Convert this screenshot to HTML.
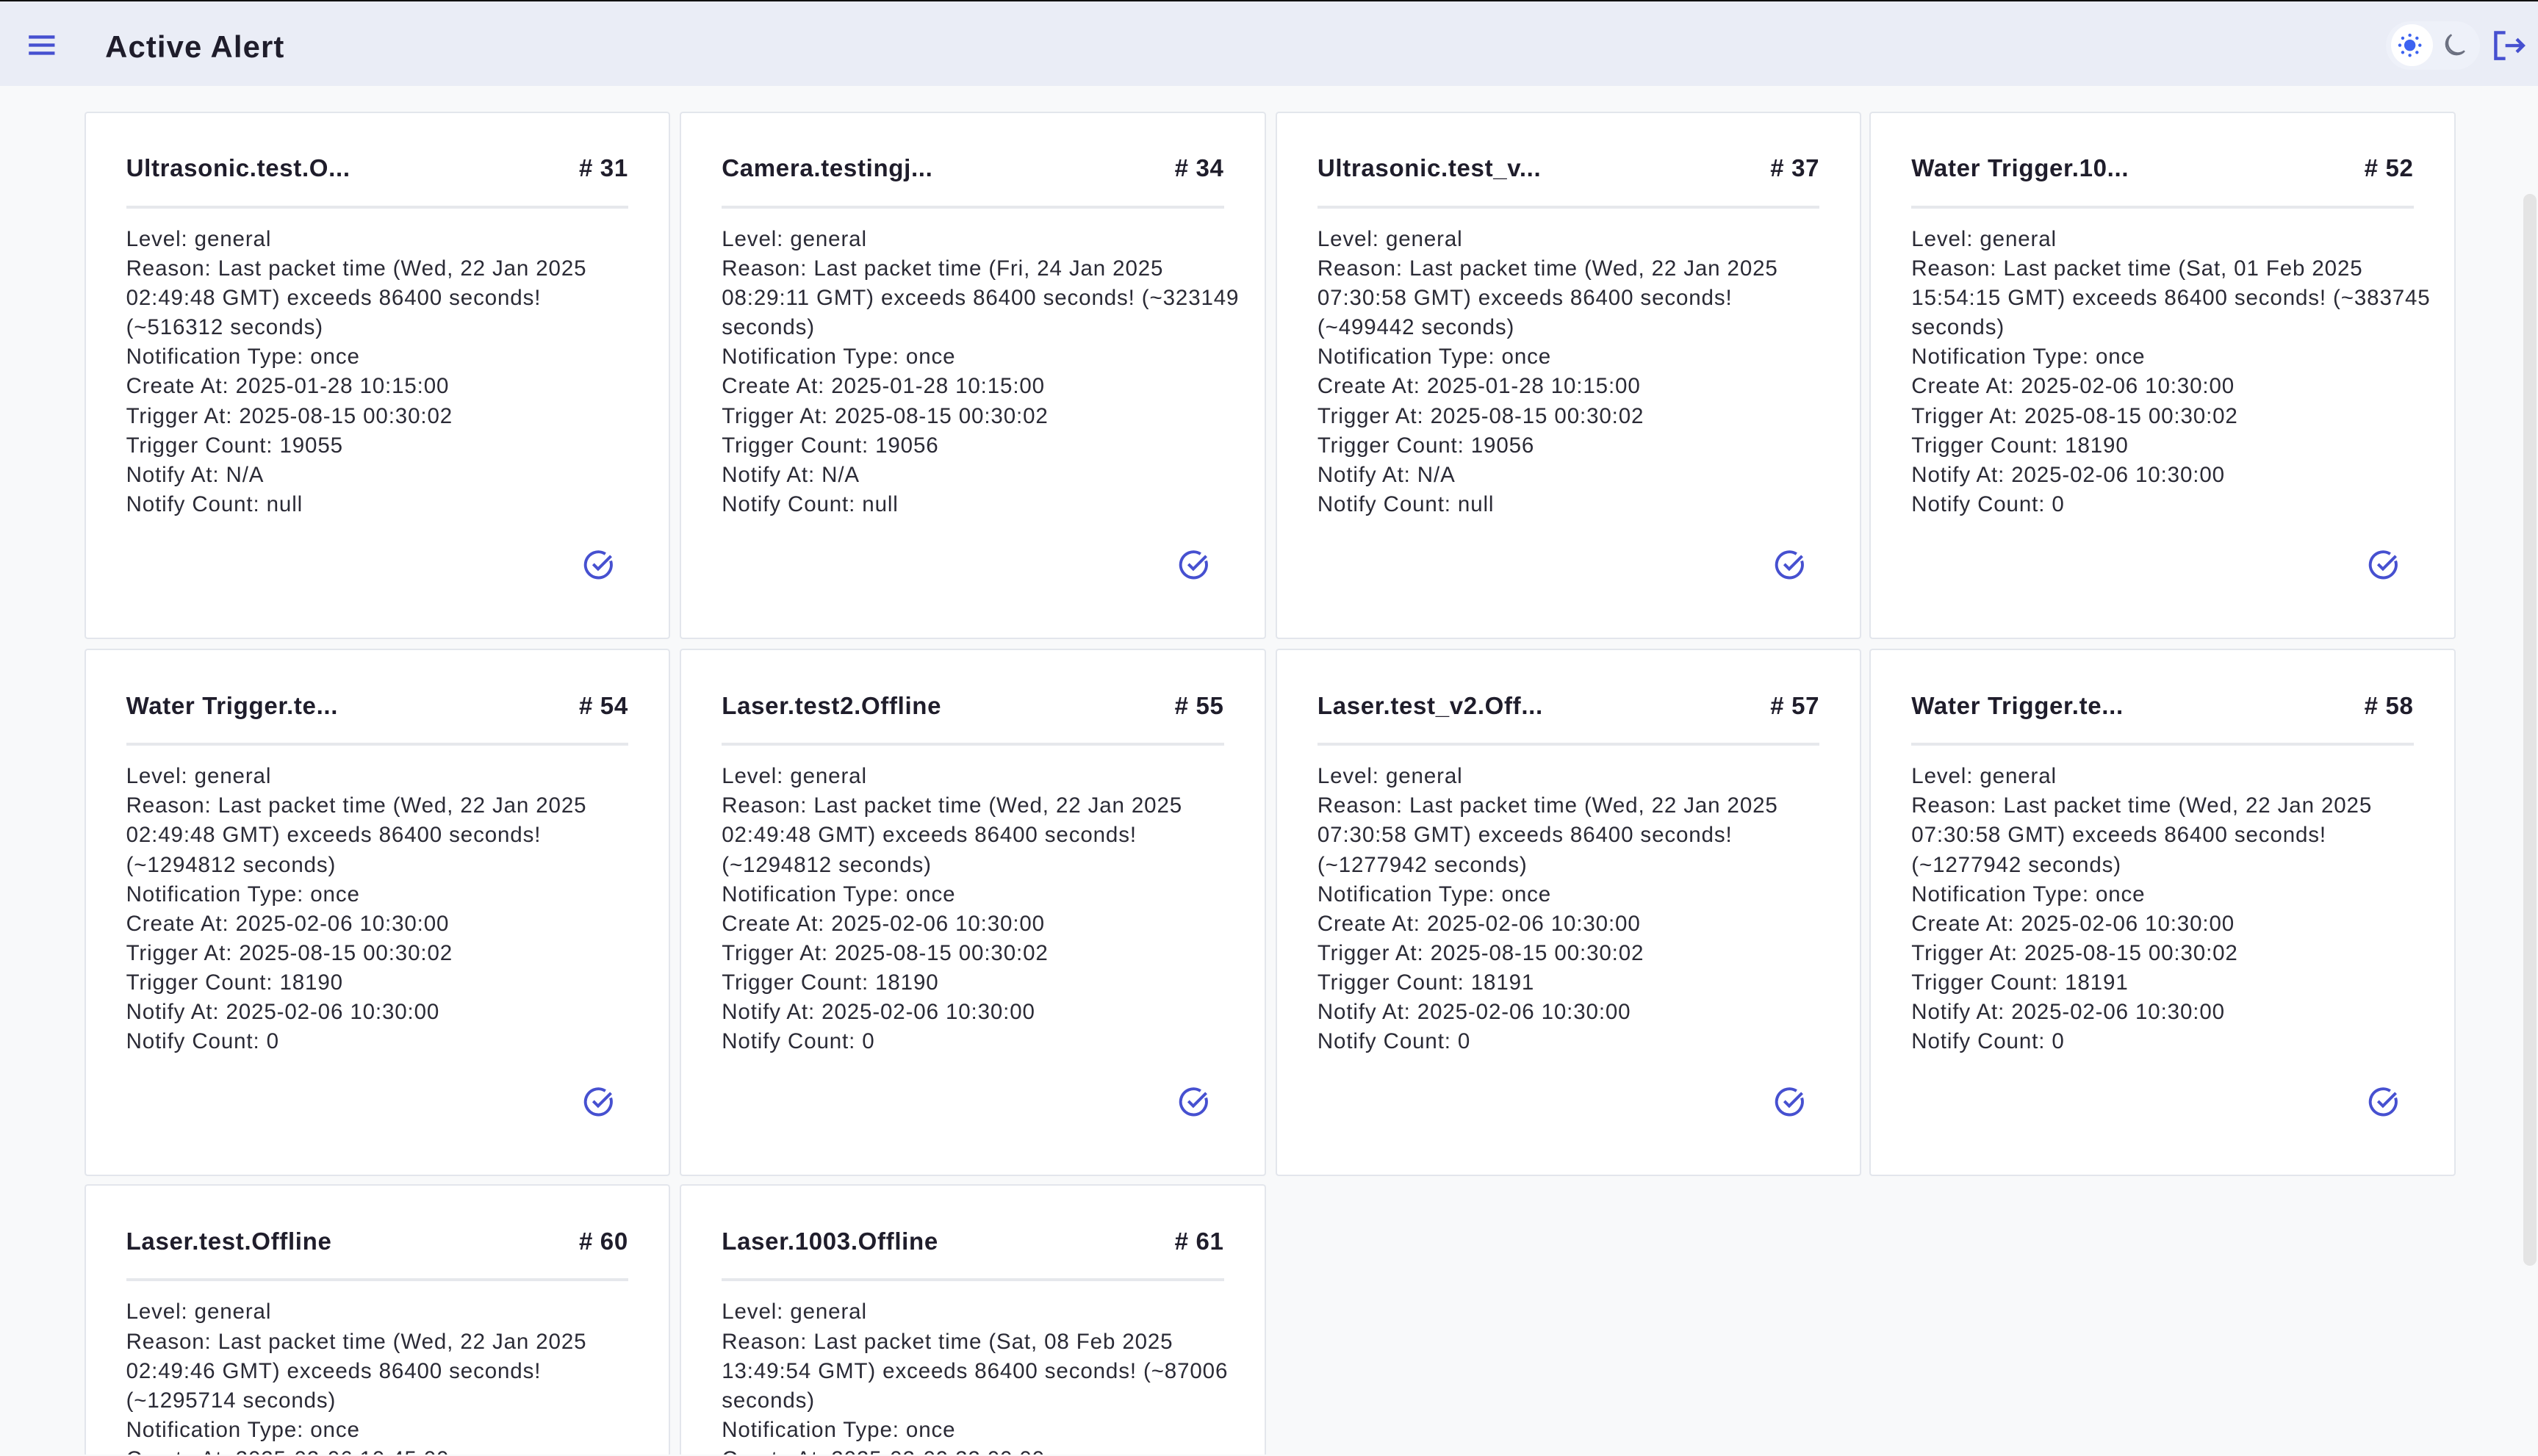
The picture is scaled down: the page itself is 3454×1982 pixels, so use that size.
<!DOCTYPE html>
<html><head><meta charset="utf-8"><style>
html,body{margin:0;padding:0;width:3454px;height:1982px;overflow:hidden;background:#f8f9fa}
#w{zoom:2.20281;width:1568px;height:899px;overflow:hidden;position:relative;font-family:"Liberation Sans",sans-serif;color:#23222e}
.top{position:absolute;left:0;top:0;width:1568px;height:1px;background:#111}
.hdr{position:absolute;left:0;top:1px;width:1568px;height:52px;background:#eaedf6}
.ttl{position:absolute;left:65px;top:17px;font-size:19px;font-weight:bold;color:#1f1d2b;letter-spacing:0.5px}
.card{position:absolute;width:362px;height:326px;background:#fff;border:1px solid #e3e6ec;border-radius:2px;box-sizing:border-box}
.ch{position:absolute;left:25px;right:25px;top:26px;height:31px;border-bottom:2px solid #e6e8ec;font-size:15px;font-weight:bold;color:#1f1d2b;letter-spacing:0.3px}
.ch span{position:absolute;right:0;top:0}
.cb{position:absolute;left:25px;top:69px;font-size:13.4px;line-height:18.2px;color:#2a2a35;white-space:nowrap;letter-spacing:0.4px}
.ck{position:absolute;left:307px;top:269px}
.sb{position:absolute;left:1559px;top:120px;width:8px;height:662px;border-radius:4px;background:#e4e4e4}
</style></head><body><div id="w">
<div class="top"></div>
<div class="hdr">
<svg style="position:absolute;left:17px;top:20px" width="18" height="14" viewBox="0 0 18 14"><path d="M1 2h16M1 7h16M1 12h16" stroke="#4650d0" stroke-width="2"/></svg>
<div class="ttl">Active Alert</div>
<div style="position:absolute;left:1474px;top:12px;width:58px;height:30px;border-radius:15px;background:#eef1f9"></div>
<div style="position:absolute;left:1477px;top:14px;width:26px;height:26px;border-radius:13px;background:#fff"></div>
<svg style="position:absolute;left:1481px;top:19px" width="16" height="16" viewBox="0 0 16 16" fill="#3d63f0"><circle cx="8" cy="8" r="3.5"/><circle cx="8" cy="1.8" r="1"/><circle cx="8" cy="14.2" r="1"/><circle cx="1.8" cy="8" r="1"/><circle cx="14.2" cy="8" r="1"/><circle cx="3.6" cy="3.6" r="1"/><circle cx="12.4" cy="3.6" r="1"/><circle cx="3.6" cy="12.4" r="1"/><circle cx="12.4" cy="12.4" r="1"/></svg>
<svg style="position:absolute;left:1508px;top:19px" width="16" height="16" viewBox="0 0 16 16"><path d="M6.5 1.5A6.5 6.5 0 1 0 14.5 11.5A6 6 0 0 1 6.5 1.5Z" fill="none" stroke="#6b7080" stroke-width="1.1"/></svg>
<svg style="position:absolute;left:1540px;top:17px" width="22" height="20" viewBox="0 0 22 20"><path d="M8 2H2V18H8M8 10H19M15 6L19 10L15 14" fill="none" stroke="#4650d0" stroke-width="2"/></svg>
</div>
<div class="sb"></div>
<div id="cards"></div>
<script>
var d=[
["Ultrasonic.test.O...","31",["Level: general","Reason: Last packet time (Wed, 22 Jan 2025","02:49:48 GMT) exceeds 86400 seconds!","(~516312 seconds)","Notification Type: once","Create At: 2025-01-28 10:15:00","Trigger At: 2025-08-15 00:30:02","Trigger Count: 19055","Notify At: N/A","Notify Count: null"]],
["Camera.testingj...","34",["Level: general","Reason: Last packet time (Fri, 24 Jan 2025","08:29:11 GMT) exceeds 86400 seconds! (~323149","seconds)","Notification Type: once","Create At: 2025-01-28 10:15:00","Trigger At: 2025-08-15 00:30:02","Trigger Count: 19056","Notify At: N/A","Notify Count: null"]],
["Ultrasonic.test_v...","37",["Level: general","Reason: Last packet time (Wed, 22 Jan 2025","07:30:58 GMT) exceeds 86400 seconds!","(~499442 seconds)","Notification Type: once","Create At: 2025-01-28 10:15:00","Trigger At: 2025-08-15 00:30:02","Trigger Count: 19056","Notify At: N/A","Notify Count: null"]],
["Water Trigger.10...","52",["Level: general","Reason: Last packet time (Sat, 01 Feb 2025","15:54:15 GMT) exceeds 86400 seconds! (~383745","seconds)","Notification Type: once","Create At: 2025-02-06 10:30:00","Trigger At: 2025-08-15 00:30:02","Trigger Count: 18190","Notify At: 2025-02-06 10:30:00","Notify Count: 0"]],
["Water Trigger.te...","54",["Level: general","Reason: Last packet time (Wed, 22 Jan 2025","02:49:48 GMT) exceeds 86400 seconds!","(~1294812 seconds)","Notification Type: once","Create At: 2025-02-06 10:30:00","Trigger At: 2025-08-15 00:30:02","Trigger Count: 18190","Notify At: 2025-02-06 10:30:00","Notify Count: 0"]],
["Laser.test2.Offline","55",["Level: general","Reason: Last packet time (Wed, 22 Jan 2025","02:49:48 GMT) exceeds 86400 seconds!","(~1294812 seconds)","Notification Type: once","Create At: 2025-02-06 10:30:00","Trigger At: 2025-08-15 00:30:02","Trigger Count: 18190","Notify At: 2025-02-06 10:30:00","Notify Count: 0"]],
["Laser.test_v2.Off...","57",["Level: general","Reason: Last packet time (Wed, 22 Jan 2025","07:30:58 GMT) exceeds 86400 seconds!","(~1277942 seconds)","Notification Type: once","Create At: 2025-02-06 10:30:00","Trigger At: 2025-08-15 00:30:02","Trigger Count: 18191","Notify At: 2025-02-06 10:30:00","Notify Count: 0"]],
["Water Trigger.te...","58",["Level: general","Reason: Last packet time (Wed, 22 Jan 2025","07:30:58 GMT) exceeds 86400 seconds!","(~1277942 seconds)","Notification Type: once","Create At: 2025-02-06 10:30:00","Trigger At: 2025-08-15 00:30:02","Trigger Count: 18191","Notify At: 2025-02-06 10:30:00","Notify Count: 0"]],
["Laser.test.Offline","60",["Level: general","Reason: Last packet time (Wed, 22 Jan 2025","02:49:46 GMT) exceeds 86400 seconds!","(~1295714 seconds)","Notification Type: once","Create At: 2025-02-06 10:45:00"]],
["Laser.1003.Offline","61",["Level: general","Reason: Last packet time (Sat, 08 Feb 2025","13:49:54 GMT) exceeds 86400 seconds! (~87006","seconds)","Notification Type: once","Create At: 2025-02-09 22:00:00"]]
];
var xs=[52,420,788,1155],ys=[69,401,732],h="";
d.forEach(function(c,i){
h+='<div class="card" style="left:'+xs[i%4]+'px;top:'+ys[Math.floor(i/4)]+'px;'+(i>=8?'height:168px;border-bottom:none':'')+'"><div class="ch">'+c[0]+'<span># '+c[1]+'</span></div><div class="cb">'+c[2].join('<br>')+'</div>'+
(i<8?'<svg class="ck" width="20" height="20" viewBox="0 0 20 20"><path d="M17.3 7.5A8 8 0 1 1 14 3.2" fill="none" stroke="#4650d0" stroke-width="1.8"/><path d="M6.5 9.5L9.5 12.5L17.5 4.5" fill="none" stroke="#4650d0" stroke-width="1.8"/></svg>':'')+'</div>';
});
document.getElementById('cards').innerHTML=h;
</script>
</div></body></html>
